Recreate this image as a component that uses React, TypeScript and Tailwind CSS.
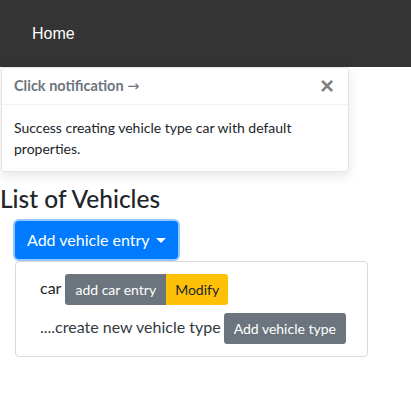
import React from 'react';

const body = { fontFamily: 'Lato, "Noto Sans", sans-serif' };

const App: React.FC = () => {
    return (
        <div className="min-h-[400px] bg-white text-[#212529]" style={body}>
            {/* Navbar */}
            <div className="h-[67px] bg-[#343434] flex items-center pl-[32px]">
                <span className="text-white text-[16px]" style={{ fontFamily: '"Liberation Sans", Arial, sans-serif' }}>Home</span>
            </div>

            {/* Toast */}
            <div className="ml-[1px] w-[348px] bg-white border border-black/10 rounded-[4px] shadow-[0_4px_12px_rgba(0,0,0,0.1)] text-[14px]">
                <div className="h-[37px] flex items-center justify-between pl-[12px] pr-[14px] border-b border-black/5 text-[#6c757d]">
                    <strong className="font-bold text-[14.5px]">Click notification <span className="font-normal" style={{ fontFamily: '"DejaVu Sans", sans-serif' }}>→</span></strong>
                    <span className="text-[24px] font-bold leading-none text-black/50" style={{ fontFamily: '"Liberation Sans", Arial, sans-serif' }}>×</span>
                </div>
                <div className="p-[12px] leading-[21px]">
                    Success creating vehicle type car with default properties.
                </div>
            </div>

            {/* List */}
            <h4 className="mt-[12px] mb-[8px] text-[24.5px] leading-[29px] font-medium">List of Vehicles</h4>
            <div className="ml-[15px]">
                <button className="h-[38px] px-[12px] rounded-[4px] bg-[#007bff] text-white text-[16px] flex items-center gap-[6px] shadow-[0_0_0_2px_rgba(38,143,255,0.5)]">
                    Add vehicle entry
                    <span className="w-0 h-0 border-l-[5px] border-r-[5px] border-t-[5px] border-l-transparent border-r-transparent border-t-white" />
                </button>
                <div className="mt-[2px] w-[353px] border border-black/15 rounded-[4px] py-[8px] whitespace-nowrap">
                    <div className="px-[24px] py-[4px] flex items-center">
                        <span className="text-[16px] mr-[4px] -mt-[4px]">car</span>
                        <button className="h-[31px] px-[10px] bg-[#6c757d] text-white text-[14px] rounded-l-[3px]">add car entry</button>
                        <button className="h-[31px] px-[9px] bg-[#ffc107] text-[#212529] text-[14px] rounded-r-[3px]">Modify</button>
                    </div>
                    <div className="px-[24px] py-[4px] flex items-center">
                        <span className="text-[16px] mr-[3px] -mt-[4px] text-[#343a40]">....create new vehicle type</span>
                        <button className="h-[31px] px-[10px] bg-[#6c757d] text-white text-[14px] rounded-[3px]">Add vehicle type</button>
                    </div>
                </div>
            </div>
        </div>
    );
};

export default App;
